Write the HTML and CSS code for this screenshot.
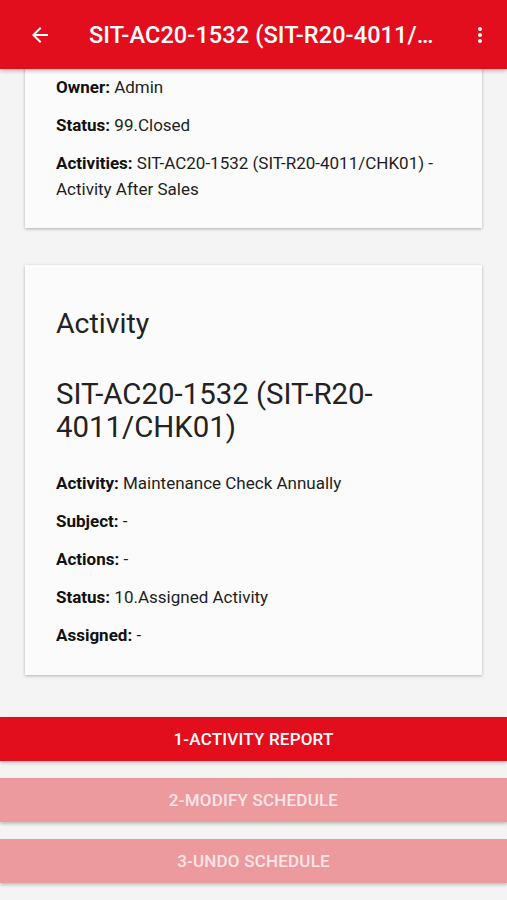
FILE: index.html
```html
<!DOCTYPE html>
<html>
<head>
<meta charset="utf-8">
<link rel="stylesheet" href="styles.css">
</head>
<body>
<div class="app">
  <header class="toolbar">
    <svg class="back" width="24" height="24" viewBox="0 0 24 24"><path d="M20 11H7.83l5.59-5.59L12 4l-8 8 8 8 1.41-1.41L7.83 13H20v-2z" fill="#fff"/></svg>
    <div class="title">SIT-AC20-1532 (SIT-R20-4011/CHK01)</div>
    <svg class="more" width="24" height="24" viewBox="0 0 24 24"><path d="M12 8c1.1 0 2-.9 2-2s-.9-2-2-2-2 .9-2 2 .9 2 2 2zm0 2c-1.1 0-2 .9-2 2s.9 2 2 2 2-.9 2-2-.9-2-2-2zm0 6c-1.1 0-2 .9-2 2s.9 2 2 2 2-.9 2-2-.9-2-2-2z" fill="#fff"/></svg>
  </header>
  <main class="content">
    <section class="card card-top">
      <p class="field"><b>Owner:</b> Admin</p>
      <p class="field"><b>Status:</b> 99.Closed</p>
      <p class="field"><b>Activities:</b> SIT-AC20-1532 (SIT-R20-4011/CHK01) - Activity After Sales</p>
    </section>
    <section class="card card-act">
      <h2 class="card-title">Activity</h2>
      <h3 class="card-sub">SIT-AC20-1532 (SIT-R20-4011/CHK01)</h3>
      <p class="field"><b>Activity:</b> Maintenance Check Annually</p>
      <p class="field"><b>Subject:</b> -</p>
      <p class="field"><b>Actions:</b> -</p>
      <p class="field"><b>Status:</b> 10.Assigned Activity</p>
      <p class="field"><b>Assigned:</b> -</p>
    </section>
    <div class="actions">
      <button class="btn">1-ACTIVITY REPORT</button>
      <button class="btn btn-disabled">2-MODIFY SCHEDULE</button>
      <button class="btn btn-disabled">3-UNDO SCHEDULE</button>
    </div>
  </main>
</div>
</body>
</html>
```
FILE: styles.css
```css
html, body {
  margin: 0;
  padding: 0;
}
body {
  background: #f4f4f4;
  font-family: Roboto, "Liberation Sans", sans-serif;
  color: #212121;
  width: 507px;
  height: 900px;
  overflow: hidden;
}
.app {
  position: relative;
  height: 900px;
  overflow: hidden;
}
.toolbar {
  position: absolute;
  top: 0;
  left: 0;
  right: 0;
  height: 69px;
  background: #e20e1e;
  display: flex;
  align-items: center;
  box-shadow: 0 2px 4px rgba(0,0,0,0.25);
  z-index: 2;
}
.back {
  margin-left: 28px;
  flex: none;
}
.title {
  margin-left: 37px;
  flex: 1;
  min-width: 0;
  color: #fff;
  font-size: 23.5px;
  font-weight: 500;
  letter-spacing: 0.1px;
  white-space: nowrap;
  overflow: hidden;
  text-overflow: ellipsis;
}
.more {
  margin: 0 15px 0 22px;
  flex: none;
}
.content {
  display: flex;
  flex-direction: column;
  margin-top: -20px;
}
.card {
  margin: 0 25px;
  background: #fbfbfb;
  box-shadow: 0 1px 3px rgba(0,0,0,0.28);
  padding: 0 31px;
}
.card-top {
  padding-top: 94px;
  padding-bottom: 14px;
}
.card-act {
  margin-top: 37px;
  padding-top: 42px;
  padding-bottom: 15px;
}
.field {
  margin: 0 0 12px;
  font-size: 17px;
  line-height: 26px;
  color: #1e1e1e;
}
.field b {
  font-weight: 700;
  color: #111;
}
.card-title {
  margin: 0 0 37px;
  font-size: 28.5px;
  font-weight: 400;
  line-height: 34px;
  color: #222;
}
.card-sub {
  margin: 0 0 26px;
  font-size: 29.4px;
  font-weight: 400;
  line-height: 33px;
  color: #222;
}
.actions {
  display: flex;
  flex-direction: column;
  gap: 17px;
  margin-top: 42px;
}
.btn {
  display: block;
  width: 100%;
  height: 44px;
  border: 0;
  background: #e20e1e;
  color: #fff;
  font-family: Roboto, "Liberation Sans", sans-serif;
  font-size: 17px;
  font-weight: 500;
  letter-spacing: 0.2px;
  box-shadow: 0 2px 3px rgba(0,0,0,0.22);
  padding: 0;
}
.btn-disabled {
  background: #ed9a9f;
  color: #fbe6e7;
}
```
